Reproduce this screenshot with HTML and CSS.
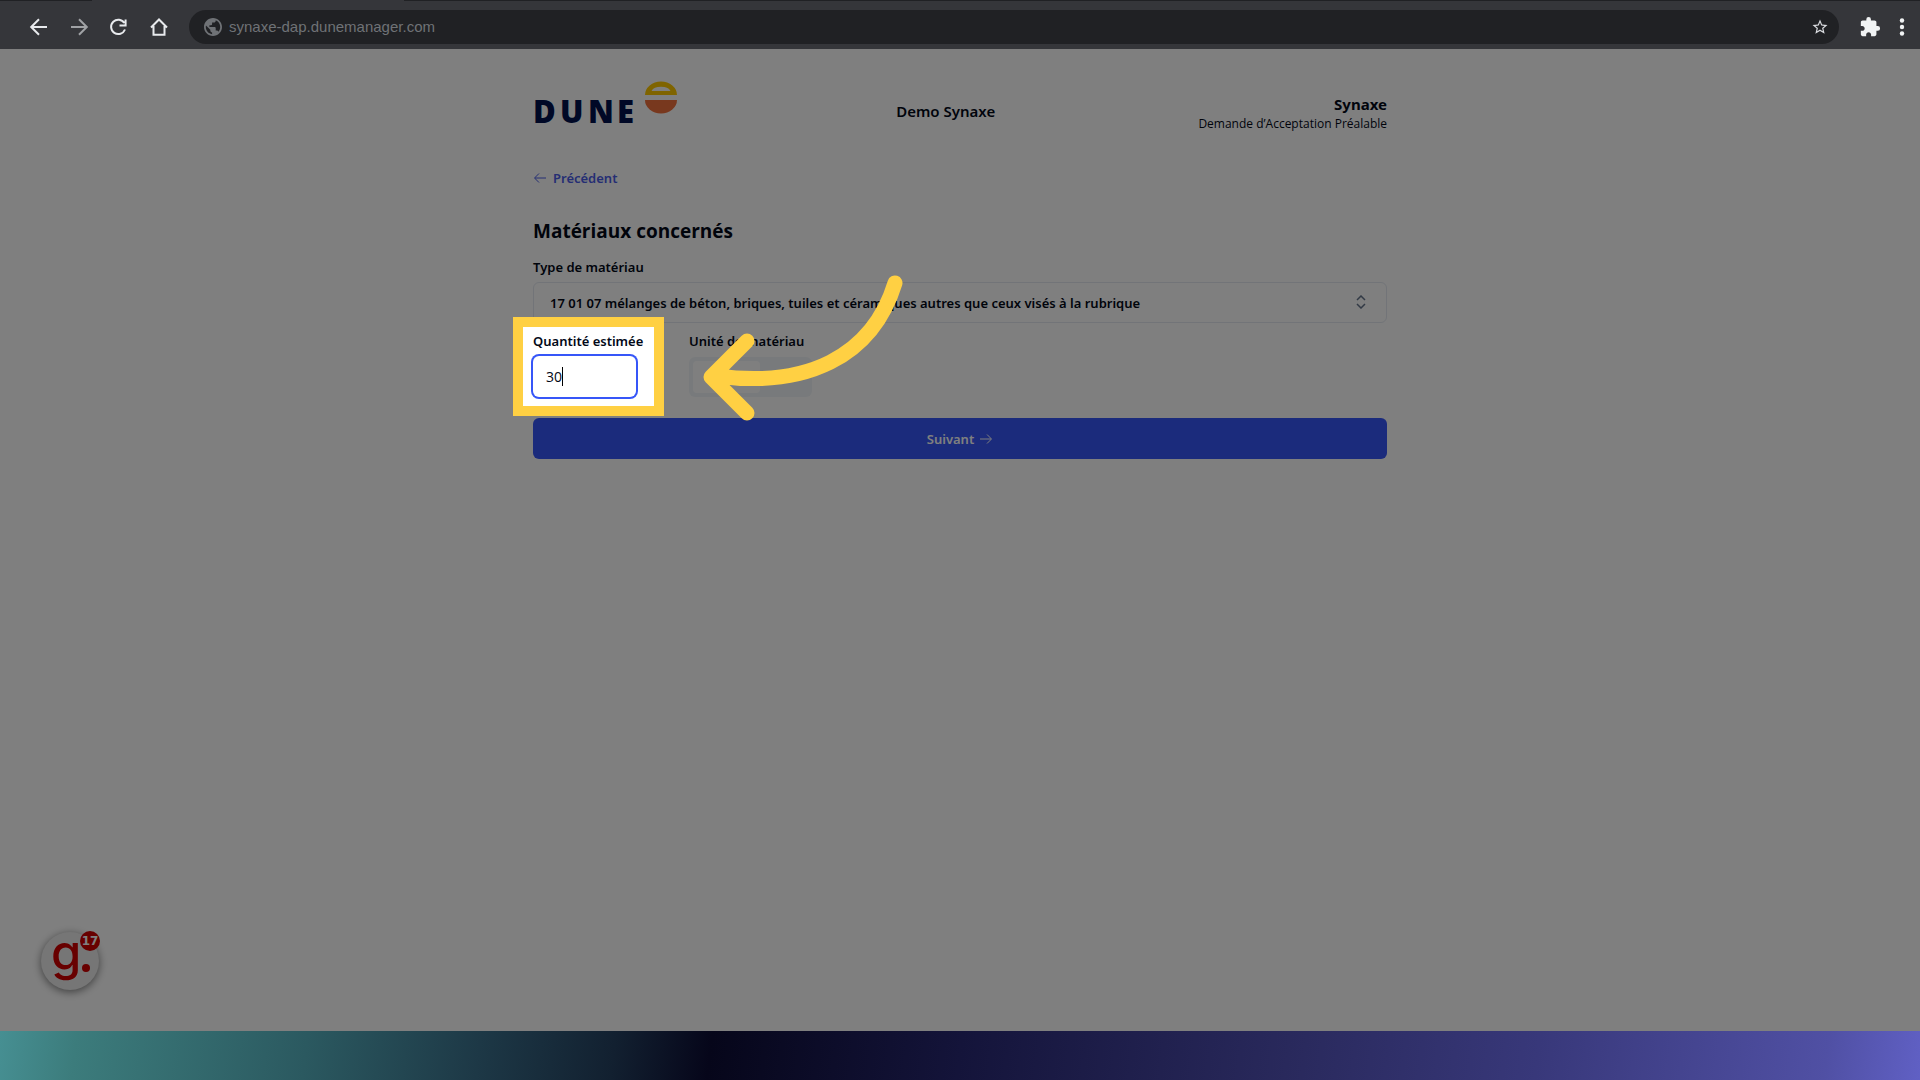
FILE: index.html
```
<!DOCTYPE html>
<html lang="fr">
<head>
  <meta charset="UTF-8" />
  <title>Demo Synaxe</title>
  <link rel="stylesheet" href="styles.css">
</head>
<body>
  <header class="browser">
    <nav class="browser-nav">
      <button aria-label="Retour"><svg width="24" height="24" viewBox="0 0 24 24"><path d="M20 12H5M12 4.2L4.2 12l7.8 7.8" /></svg></button>
      <button class="off" aria-label="Avancer"><svg width="24" height="24" viewBox="0 0 24 24"><path d="M4 12h15M12 4.2l7.8 7.8-7.8 7.8" /></svg></button>
      <button aria-label="Actualiser"><svg width="24" height="24" viewBox="0 0 24 24"><path d="M17.400 8A7.2 7.2 0 1 0 18 14.500M18.600 4.500V10.500H12.500" /></svg></button>
      <button aria-label="Accueil"><svg width="24" height="24" viewBox="0 0 24 24"><path d="M4 12.500L12 4.500l8 8M6.500 11v8.800h11V11" /></svg></button>
    </nav>
    <div class="address">
      <svg width="18" height="18" viewBox="2 2 20 20"><path d="M12 2C6.480 2 2 6.480 2 12s4.480 10 10 10 10-4.480 10-10S17.520 2 12 2zm-1 17.930c-3.950-.490-7-3.850-7-7.930 0-.620.080-1.210.210-1.790L9 15v1c0 1.100.900 2 2 2v1.930zm6.900-2.540c-.260-.810-1-1.390-1.900-1.390h-1v-3c0-.550-.450-1-1-1H8v-2h2c.550 0 1-.450 1-1V7h2c1.100 0 2-.900 2-2v-.410c2.930 1.190 5 4.060 5 7.410 0 2.080-.800 3.970-2.100 5.390z" /></svg>
      <input type="text" aria-label="Adresse" value="synaxe-dap.dunemanager.com">
      <button aria-label="Favori"><svg width="18" height="18" viewBox="0 0 24 24"><path d="M22 9.240l-7.190-.620L12 2 9.190 8.630 2 9.240l5.460 4.730L5.820 21 12 17.270 18.180 21l-1.630-7.030L22 9.240zM12 15.400l-3.760 2.270 1-4.280-3.320-2.880 4.380-.380L12 6.100l1.710 4.040 4.380.380-3.320 2.880 1 4.280L12 15.400z" /></svg></button>
    </div>
    <div class="browser-tools">
      <button aria-label="Extensions"><svg width="22" height="22" viewBox="0 0 24 24"><path d="M20.500 11H19V7c0-1.100-.900-2-2-2h-4V3.500a2.500 2.500 0 0 0-5 0V5H4c-1.100 0-1.990.900-1.990 2v3.800H3.500c1.490 0 2.700 1.210 2.700 2.700s-1.210 2.700-2.700 2.700H2V20c0 1.100.900 2 2 2h3.800v-1.500c0-1.490 1.210-2.700 2.700-2.700s2.700 1.210 2.700 2.700V22H17c1.100 0 2-.900 2-2v-4h1.500a2.500 2.500 0 0 0 0-5z" /></svg></button>
      <button aria-label="Menu"><svg width="6" height="20" viewBox="0 0 6 20"><circle cx="3" cy="3.500" r="2.200" /><circle cx="3" cy="10" r="2.200" /><circle cx="3" cy="16.500" r="2.200" /></svg></button>
    </div>
  </header>

  <main class="page">
    <div class="content">
      <div class="top">
        <svg class="logo" width="160" height="60" viewBox="0 0 160 60" role="img" aria-label="Dune">
          <text y="42" x="0 27 55 84">DUNE</text>
          <path class="sun" fill-rule="evenodd" d="M112 14a16 13.500 0 0 1 32 0zM118.500 10h19a10 6 0 0 0-19 0z" />
          <path class="dune" d="M112 19h32a16 13.500 0 0 1-32 0z" />
        </svg>
        <div class="client">Demo Synaxe</div>
        <div class="company">
          <strong>Synaxe</strong>
          <span>Demande d’Acceptation Préalable</span>
        </div>
      </div>

      <a class="back" href="#">
        <svg width="14" height="14" viewBox="0 0 14 14"><path d="M13 7H2M6 2.500L1.500 7 6 11.500" /></svg>
        Précédent
      </a>

      <h1>Matériaux concernés</h1>

      <form>
        <label for="type">Type de matériau</label>
        <div class="select-wrap">
          <select id="type">
            <option>17 01 07 mélanges de béton, briques, tuiles et céramiques autres que ceux visés à la rubrique</option>
          </select>
          <svg width="12" height="14" viewBox="0 0 12 14"><path d="M2 5l4-4 4 4M2 9l4 4 4-4" /></svg>
        </div>

        <div class="row">
          <div class="field quantity">
            <label for="quantity">Quantité estimée</label>
            <input type="text" id="quantity" value="30">
            <span class="caret"></span>
            <div class="spotlight"></div>
            <svg class="arrow" width="210" height="152" viewBox="0 0 210 152">
              <path d="M202 13C179 88 112 118 24 106M54 71L18 107L54 143" />
            </svg>
          </div>
          <fieldset class="field">
            <legend>Unité de matériau</legend>
            <div class="toggle">
              <input type="radio" name="unit" id="unitT" checked><label for="unitT">Tonne</label>
              <input type="radio" name="unit" id="unitM"><label for="unitM">m3</label>
            </div>
          </fieldset>
        </div>

        <button class="next" type="submit">
          Suivant
          <svg width="14" height="14" viewBox="0 0 14 14"><path d="M1 7h11M8 2.500L12.500 7 8 11.500" /></svg>
        </button>
      </form>
    </div>

    <button class="guide" aria-label="Aide">
      <svg width="58" height="58" viewBox="0 0 58 58">
        <text x="10" y="38">g</text>
        <circle cx="45" cy="36" r="4" />
      </svg>
      <span class="badge">17</span>
    </button>
  </main>

  <footer class="backdrop"></footer>
</body>
</html>
```
FILE: styles.css
```
:root {
  --blue: #3656f8;
  --text: #020817;
  --border: #e4e8f0;
  --yellow: #ffd043;
  --chrome: #35363a;
  --chrome-dark: #202124;
}

* {
  box-sizing: border-box;
}

body {
  margin: 0;
  min-height: 100vh;
  display: flex;
  flex-direction: column;
  font-family: "Noto Sans", "Open Sans", sans-serif;
  font-size: 13px;
  line-height: 20px;
  color: var(--text);
}

button, input, select {
  font: inherit;
  color: inherit;
  border: none;
  background: none;
  padding: 0;
  margin: 0;
}

button {
  cursor: pointer;
}

svg {
  display: block;
}

/* browser bar */
.browser {
  display: flex;
  align-items: center;
  height: 49px;
  padding: 4px 15px 0 27px;
  background: linear-gradient(90deg, var(--chrome-dark) 92px, var(--chrome) 92px 404px, var(--chrome-dark) 404px) top / 100% 1px no-repeat, var(--chrome);
}

.browser-nav {
  display: flex;
  gap: 16px;
  margin-right: 18px;
}

.browser-nav svg {
  fill: none;
  stroke: #e8eaed;
  stroke-width: 2;
}

.browser-nav .off {
  opacity: 0.6;
}

.address {
  flex: 1;
  display: flex;
  align-items: center;
  gap: 7px;
  height: 34px;
  padding: 0 10px 0 15px;
  border-radius: 17px;
  background: var(--chrome-dark);
}

.address svg {
  fill: #6f7276;
}

.address input {
  flex: 1;
  font-family: "Liberation Sans", Arial, sans-serif;
  font-size: 15px;
  color: #6f7276;
}

.address button svg {
  fill: #dadce0;
}

.browser-tools {
  display: flex;
  align-items: center;
  gap: 18px;
  margin-left: 20px;
}

.browser-tools svg {
  fill: #f1f3f4;
}

/* page */
.page {
  position: relative;
  flex: 1;
  padding-top: 32px;
  overflow: hidden;
  background: #fff;
}

.content {
  width: 100%;
  max-width: 854px;
  margin: 0 auto;
}

.top {
  display: flex;
  align-items: center;
  justify-content: space-between;
}

.logo text {
  font-family: "Open Sans", sans-serif;
  font-size: 31px;
  font-weight: 800;
  fill: #00104c;
}

.logo .sun {
  fill: #ffc800;
}

.logo .dune {
  fill: #f0703c;
}

.client {
  font-size: 15px;
  font-weight: 600;
}

.company {
  padding-top: 2px;
  text-align: right;
}

.company strong {
  display: block;
  font-size: 15px;
  line-height: 24px;
}

.company span {
  display: block;
  font-family: "Open Sans", sans-serif;
  font-size: 12px;
  line-height: 16px;
}

.back {
  display: inline-flex;
  align-items: center;
  gap: 6px;
  margin-top: 27px;
  color: #4a5ce8;
  font-weight: 600;
  text-decoration: none;
}

.back svg, .next svg {
  fill: none;
  stroke: currentColor;
}

h1 {
  margin: 27px 0 12px;
  font-family: "Open Sans", sans-serif;
  font-size: 19px;
  line-height: 28px;
  font-weight: 700;
}

label, legend {
  display: block;
  padding: 0;
  font-weight: 600;
}

.select-wrap {
  position: relative;
  margin: 5px 0 8px;
}

select {
  display: block;
  width: 100%;
  height: 41px;
  padding: 0 16px;
  border: 1px solid var(--border);
  border-radius: 6px;
  font-weight: 600;
  appearance: none;
}

.select-wrap svg {
  position: absolute;
  right: 20px;
  top: 13px;
  fill: none;
  stroke: #64748b;
  stroke-width: 1.5;
}

.row {
  display: flex;
  gap: 44px;
  margin-bottom: 21px;
}

.field {
  margin: 0;
  padding: 0;
  border: none;
}

.quantity {
  position: relative;
  width: 112px;
}

.quantity label {
  white-space: nowrap;
}

.quantity input {
  width: 103px;
  height: 41px;
  margin-top: 5px;
  padding: 0 13px;
  border-radius: 6px;
  box-shadow: 0 0 0 2px var(--blue);
  font-family: "Open Sans", sans-serif;
  font-size: 14px;
}

.caret {
  position: absolute;
  left: 29px;
  top: 36px;
  width: 1px;
  height: 19px;
  background: #000;
}

/* everything around the highlighted field is dimmed */
.spotlight {
  position: absolute;
  z-index: 5;
  left: -20px;
  top: -14px;
  width: 151px;
  height: 99px;
  border: 10px solid var(--yellow);
  box-shadow: 0 0 0 9999px rgba(0, 0, 0, 0.5);
  pointer-events: none;
}

.arrow {
  position: absolute;
  z-index: 6;
  left: 160px;
  top: -61px;
  fill: none;
  stroke: var(--yellow);
  stroke-width: 15;
  stroke-linecap: round;
  stroke-linejoin: round;
  pointer-events: none;
}

.toggle {
  display: flex;
  height: 40px;
  margin-top: 6px;
  padding: 4px;
  border-radius: 6px;
  background: #f1f5f9;
}

.toggle input {
  position: absolute;
  opacity: 0;
}

.toggle label {
  padding: 6px 14px;
  border-radius: 4px;
}

.toggle input:checked + label {
  background: #fff;
}

.next {
  display: flex;
  align-items: center;
  justify-content: center;
  gap: 5px;
  width: 100%;
  height: 41px;
  border-radius: 6px;
  background: var(--blue);
  color: #fff;
  font-weight: 600;
}

/* floating help button */
.guide {
  position: absolute;
  left: 41px;
  bottom: 41px;
  width: 58px;
  height: 58px;
  border-radius: 50%;
  background: #ececec;
  box-shadow: 0 2px 8px rgba(0, 0, 0, 0.5);
}

.guide svg {
  overflow: visible;
  fill: #d00000;
}

.guide text {
  font-family: Inter, sans-serif;
  font-size: 49px;
  font-weight: 500;
}

.badge {
  position: absolute;
  top: -1px;
  right: -1px;
  width: 20px;
  height: 20px;
  border-radius: 50%;
  background: #d00000;
  color: #fff;
  font-family: "DejaVu Sans", sans-serif;
  font-size: 12px;
  line-height: 20px;
  font-weight: 700;
}

.backdrop {
  height: 49px;
  background: linear-gradient(97deg, #468f92 0%, #3c7c7c 4%, #2b5960 16%, #1d3846 25%, #122030 32%, #06061a 37%, #14143a 50%, #29295c 67%, #38387a 80%, #5050a4 95%, #6060c4 100%);
}
```
